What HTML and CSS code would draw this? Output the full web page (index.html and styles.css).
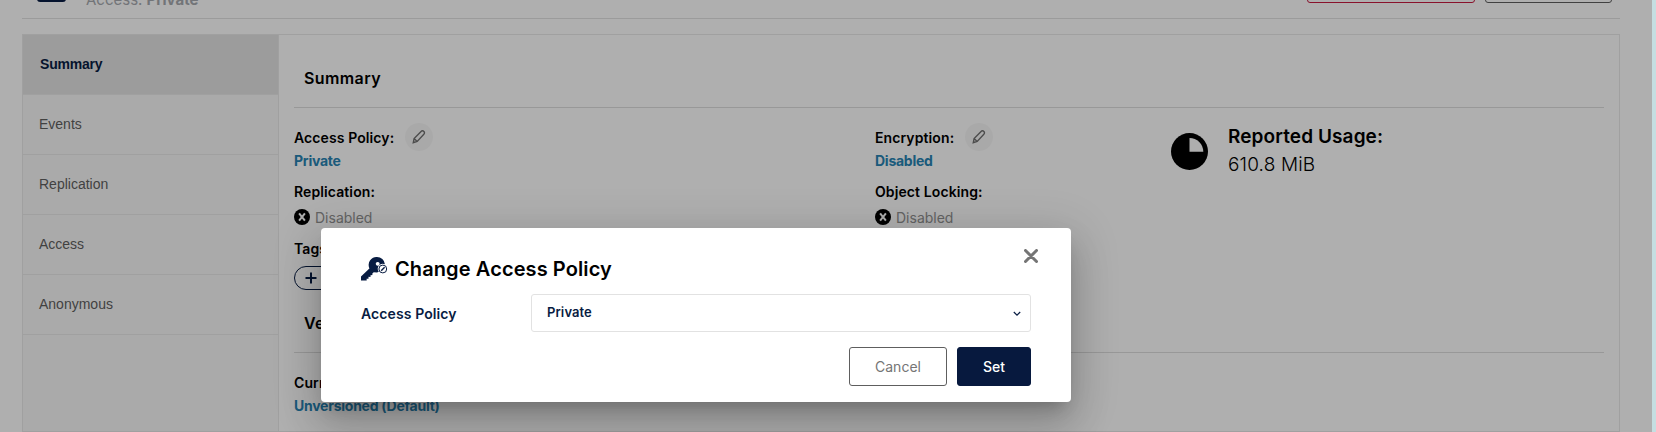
FILE: index.html
```html
<!DOCTYPE html>
<html lang="en">
<head>
  <meta charset="UTF-8" />
  <meta name="viewport" content="width=device-width, initial-scale=1" />
  <title>Bucket Summary</title>
  <link rel="stylesheet" href="styles.css">
</head>
<body>

  <div class="page">
    <!-- Bucket header -->
    <div class="header">
      <div class="bucket-icon"></div>
      <div class="bucket-access">Access: <b>Private</b></div>
      <div class="header-actions">
        <div class="header-btn delete"></div>
        <div class="header-btn refresh"></div>
      </div>
    </div>

    <div class="panel">
      <div class="tabs">
        <div class="tab active">Summary</div>
        <div class="tab">Events</div>
        <div class="tab">Replication</div>
        <div class="tab">Access</div>
        <div class="tab">Anonymous</div>
      </div>

      <div class="content">
        <h2 class="section-title">Summary</h2>
        <div class="summary">
          <div class="column main">
            <div class="label">Access Policy:
              <span class="edit"><svg width="14" height="14" viewBox="0 0 14 14"><path d="M1.3 12.7l.8-4.1L8.6 1.9c1.2-1.2 2.5-1.2 3.3-.4s.8 2-.3 3.1L5.2 11.4zM2.1 8.6l3.1 2.8"/></svg></span>
            </div>
            <div class="link">Private</div>
            <div class="label second">Replication:</div>
            <div class="status"><svg width="16" height="16" viewBox="0 0 16 16"><circle cx="8" cy="8" r="8"/><path d="M5.1 4.3l5.8 7.4M10.9 4.3l-5.8 7.4"/></svg>Disabled</div>
            <div class="label tags">Tags:</div>
            <div class="add-tag"><svg width="12" height="12" viewBox="0 0 12 12"><path d="M6 .5v11M.5 6h11"/></svg></div>
          </div>
          <div class="column side">
            <div class="label">Encryption:
              <span class="edit"><svg width="14" height="14" viewBox="0 0 14 14"><path d="M1.3 12.7l.8-4.1L8.6 1.9c1.2-1.2 2.5-1.2 3.3-.4s.8 2-.3 3.1L5.2 11.4zM2.1 8.6l3.1 2.8"/></svg></span>
            </div>
            <div class="link">Disabled</div>
            <div class="label second">Object Locking:</div>
            <div class="status"><svg width="16" height="16" viewBox="0 0 16 16"><circle cx="8" cy="8" r="8"/><path d="M5.1 4.3l5.8 7.4M10.9 4.3l-5.8 7.4"/></svg>Disabled</div>
          </div>
          <div class="usage">
            <svg width="37" height="37" viewBox="0 0 37 37"><circle cx="18.5" cy="18.5" r="18.5"/><path d="M18.5 18.8V5A13.8 13.8 0 0 1 32.3 18.8z"/></svg>
            <div>
              <div class="usage-title">Reported Usage:</div>
              <div class="usage-value">610.8 MiB</div>
            </div>
          </div>
        </div>

        <h2 class="section-title versioning">Versioning</h2>
        <div class="label current">Current Status:</div>
        <div class="link">Unversioned (Default)</div>
      </div>
    </div>
  </div>

  <!-- Change access policy dialog -->
  <div class="overlay">
    <div class="modal">
      <svg class="close" width="14" height="14" viewBox="0 0 14 14"><path d="M1.5 1.5l11 11M12.5 1.5l-11 11"/></svg>
      <div class="modal-title">
        <svg width="27" height="24" viewBox="0 0 27 24">
          <path class="key" fill-rule="evenodd" d="M16 0a8 8 0 0 1 7.9 7.2A5 5 0 0 0 17.8 14.7l-1.8.8-3.3-.2-1.5 1.5.3 1.3-2 .1v1.7l-2-.1v1.9H5.6l.1 1.9H0v-4.2l8.4-8A8 8 0 0 1 16 0zM16.7 4.9a1.9 1.9 0 1 0 .01 0z"/>
          <circle class="badge" cx="21.8" cy="12" r="3.9"/>
          <path class="badge slash" d="M20.2 13.8l3.4-3.6"/>
        </svg>
        Change Access Policy
      </div>
      <div class="field">
        <label>Access Policy</label>
        <div class="select">Private
          <svg width="8" height="6" viewBox="0 0 8 6"><path d="M.8 1L4 4.2 7.2 1"/></svg>
        </div>
      </div>
      <div class="modal-actions">
        <button type="button" class="cancel">Cancel</button>
        <button type="button" class="set">Set</button>
      </div>
    </div>
  </div>

</body>
</html>
```

FILE: styles.css
```css
* {
  box-sizing: border-box;
}

body {
  font-family: Inter, sans-serif;
  font-size: 14px;
  background: #c5dee1;
  height: 432px;
  margin: 0;
  overflow: hidden;
}

.page {
  width: 1652px;
  height: 432px;
  background: #fbfbfb;
  padding: 0 32px 0 22px;
}

.header {
  display: flex;
  align-items: flex-end;
  height: 19px;
  border-bottom: 1px solid #dedede;
}

.bucket-icon {
  width: 29px;
  height: 30px;
  margin: 0 20px 16px 15px;
  border-radius: 3px;
  background: #081c42;
}

.bucket-access {
  font-size: 15px;
  line-height: 18px;
  margin-bottom: 9px;
  color: #a4a7ac;
}

.header-actions {
  display: flex;
  gap: 10px;
  margin-left: auto;
  margin-right: 8px;
}

.header-btn {
  width: 168px;
  height: 38px;
  margin-bottom: 15px;
  border: 1px solid #c51b3f;
  border-radius: 3px;
}

.header-btn.refresh {
  width: 127px;
  border-color: #5e5e5e;
}

.panel {
  display: flex;
  height: 398px;
  margin-top: 15px;
  border: 1px solid #e5e5e5;
}

.tabs {
  width: 256px;
  background: #f4f4f4;
  border-right: 1px solid #e5e5e5;
  font-family: "Liberation Sans", Arial, sans-serif;
}

.tab {
  height: 60px;
  line-height: 59px;
  padding-left: 16px;
  color: #5e5e5e;
  border-bottom: 1px solid #e5e5e5;
}

.tab.active {
  padding-left: 17px;
  background: #e0e0e0;
  color: #081c42;
  font-weight: bold;
  letter-spacing: -0.2px;
}

.content {
  flex: 1;
  padding: 15px;
}

.section-title {
  margin: 0;
  height: 58px;
  padding: 16px 10px 0;
  font-size: 16px;
  font-weight: 600;
  line-height: 24px;
  letter-spacing: 0.4px;
  border-bottom: 1px solid #dadada;
}

.summary {
  display: flex;
  height: 187px;
  padding-top: 15px;
}

.column.main {
  width: 581px;
}

.column.side {
  width: 296px;
}

.label {
  display: flex;
  align-items: center;
  height: 28px;
  font-weight: 600;
  letter-spacing: 0.1px;
}

.edit {
  display: flex;
  align-items: center;
  justify-content: center;
  width: 28px;
  height: 28px;
  margin: 0 0 0 11px;
  border-radius: 50%;
  background: #f3f3f3;
}

.edit svg {
  fill: none;
  stroke: #6e6e6e;
  stroke-width: 1.4;
}

.link {
  height: 18px;
  margin-top: 1px;
  line-height: 18px;
  color: #2781b0;
  font-weight: 700;
  letter-spacing: -0.25px;
}

.label.second {
  height: 20px;
  margin-top: 11px;
}

.status {
  display: flex;
  align-items: center;
  gap: 5px;
  height: 20px;
  margin-top: 6px;
  color: #8e8e8e;
}

.status path {
  stroke: #fafafa;
  stroke-width: 2;
}

.label.tags {
  height: 20px;
  margin-top: 11px;
}

.add-tag {
  display: flex;
  align-items: center;
  width: 100px;
  height: 24px;
  margin-top: 8px;
  padding-left: 10px;
  border: 1px solid #081c42;
  border-radius: 12px;
}

.add-tag path {
  stroke: #081c42;
  stroke-width: 2;
}

.usage {
  display: flex;
  gap: 20px;
}

.usage svg {
  margin-top: 10px;
}

.usage path {
  fill: #fafafa;
}

.usage-title {
  font-size: 19px;
  font-weight: 600;
  line-height: 28px;
  letter-spacing: 0.1px;
}

.usage-value {
  font-size: 19px;
  font-weight: 300;
  line-height: 28px;
  letter-spacing: 0.15px;
}

.label.current {
  margin-top: 15px;
}

.overlay {
  position: absolute;
  top: 0;
  left: 0;
  width: 1652px;
  height: 432px;
  background: rgba(0, 0, 0, 0.3);
}

.modal {
  position: absolute;
  top: 228px;
  left: 321px;
  width: 750px;
  height: 174px;
  padding: 28px 40px 16px;
  border-radius: 4px;
  background: white;
  box-shadow: 0 11px 15px -7px rgba(0,0,0,0.2), 0 24px 38px 3px rgba(0,0,0,0.14), 0 9px 46px 8px rgba(0,0,0,0.12);
}

.close {
  position: absolute;
  top: 21px;
  right: 33px;
  fill: none;
  stroke: #757575;
  stroke-width: 3;
  stroke-linecap: round;
}

.modal-title {
  display: flex;
  align-items: center;
  gap: 7px;
  height: 26px;
  font-size: 20px;
  font-weight: 600;
  letter-spacing: 0.1px;
}

.key {
  fill: #081c42;
}

.badge {
  fill: none;
  stroke: #081c42;
  stroke-width: 1;
}

.badge.slash {
  stroke-width: 1.4;
}

.field {
  display: flex;
  align-items: center;
  height: 38px;
  margin-top: 12px;
  color: #081c42;
  font-weight: 600;
  letter-spacing: 0.1px;
}

.field label {
  width: 170px;
}

.select {
  display: flex;
  flex: 1;
  align-items: center;
  justify-content: space-between;
  height: 38px;
  padding: 0 9px 2px 15px;
  border: 1px solid #e2e2e2;
  border-radius: 3px;
  font-size: 13px;
}

.select svg {
  margin-top: 4px;
  fill: none;
  stroke: #081c42;
  stroke-width: 1.2;
}

.modal-actions {
  display: flex;
  justify-content: flex-end;
  gap: 10px;
  margin-top: 15px;
}

button {
  height: 39px;
  font-family: inherit;
  font-size: 14px;
  border-radius: 3px;
  cursor: pointer;
}

.cancel {
  width: 98px;
  background: white;
  border: 1px solid #5e5e5e;
  color: #757575;
}

.set {
  width: 74px;
  background: #07193e;
  border: 1px solid #07193e;
  color: white;
  font-weight: 500;
}
```
